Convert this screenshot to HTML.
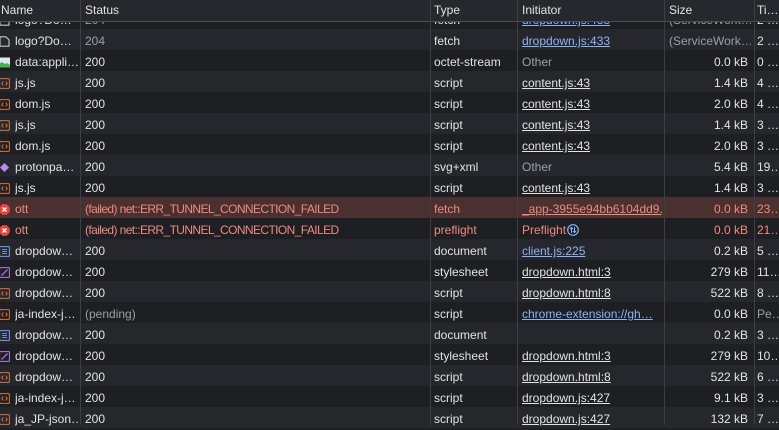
<!DOCTYPE html>
<html><head><meta charset="utf-8"><style>
*{margin:0;padding:0;box-sizing:border-box}
body{width:779px;height:425px;overflow:hidden;background:#1e1f23;font-family:"Liberation Sans",sans-serif;font-size:12px;color:#e3e3e3;position:relative}
.r{position:absolute;left:0;width:779px;height:21px;line-height:21px;white-space:nowrap}
.l{background:#26272c}.d{background:#1e1f23}
.f{background:#4a302f;color:#f08a7e}
.r span{position:absolute;top:2px;overflow:hidden}
.n{left:15px;width:64px}
.s{left:85px;width:340px}
.fl{letter-spacing:-0.6px}
.t{left:434px;width:80px}
.i{left:522px;width:140px}
.z{left:666px;width:82px;text-align:right}
.m{left:757px;width:22px}
.g{color:#9aa0a6}
.u{text-decoration:underline}
.b{color:#8ab4f8}
.ic{position:absolute;left:-1px;top:7px;width:11px;height:11px}
.hdr{position:absolute;left:0;top:0;width:779px;height:22px;background:#26282d;border-bottom:1px solid #4a4d55;line-height:21px;z-index:2}
.hdr span{position:absolute;top:0}
.sep{position:absolute;top:0;height:425px;width:1px;background:#3c3f47;z-index:3}
</style></head><body>
<svg width="0" height="0" style="position:absolute">
<defs>
<symbol id="js" viewBox="0 0 11 11"><rect x="0.5" y="0.5" width="10" height="10" rx="1.5" fill="none" stroke="#c0683a" stroke-width="1.2"/><path d="M4.3 3.5L2.8 5.5 4.3 7.5M6.7 3.5L8.2 5.5 6.7 7.5" fill="none" stroke="#c0683a" stroke-width="1.1"/></symbol>
<symbol id="doc" viewBox="0 0 11 11"><rect x="0.5" y="0.5" width="10" height="10" rx="1" fill="none" stroke="#6a8fd6" stroke-width="1.2"/><path d="M3 3.5h5M3 5.5h5M3 7.5h5" stroke="#6a8fd6" stroke-width="1.1"/></symbol>
<symbol id="css" viewBox="0 0 11 11"><rect x="0.5" y="0.5" width="10" height="10" rx="1" fill="none" stroke="#a070d0" stroke-width="1.2"/><path d="M2.5 8.5L8.5 2.5" stroke="#a070d0" stroke-width="1.4"/></symbol>
<symbol id="err" viewBox="0 0 11 11"><circle cx="5.5" cy="5.5" r="5.5" fill="#e3463d"/><path d="M3.5 3.5l4 4M7.5 3.5l-4 4" stroke="#fff" stroke-width="1.3"/></symbol>
<symbol id="img" viewBox="0 0 11 11"><rect x="0" y="0.5" width="11" height="10" fill="#dfe8f2"/><path d="M0 10.5V7l3-2 3 2 2-1 3 2v2.5z" fill="#4caf50"/></symbol>
<symbol id="fet" viewBox="0 0 11 11"><path d="M1 0.8h6l3 3v6.4H1z" fill="none" stroke="#c8c8c8" stroke-width="1.1"/></symbol>
<symbol id="svg" viewBox="0 0 11 11"><path d="M5.5 1L10 5.5 5.5 10 1 5.5z" fill="#b58cf0"/></symbol>
<symbol id="pf" viewBox="0 0 12 12"><circle cx="6" cy="6" r="5.3" fill="none" stroke="#8ab4f8" stroke-width="1.2"/><path d="M4.5 9V3.5M3 5l1.5-1.5L6 5M7.5 3v5.5M6 7l1.5 1.5L9 7" fill="none" stroke="#8ab4f8" stroke-width="1"/></symbol>
</defs></svg>

<div class="hdr"><span style="left:1px">Name</span><span style="left:85px">Status</span><span style="left:434px">Type</span><span style="left:522px">Initiator</span><span style="left:669px">Size</span><span style="left:757px">Ti…</span></div>
<div class="sep" style="left:80px"></div><div class="sep" style="left:430px"></div><div class="sep" style="left:517px"></div><div class="sep" style="left:664px"></div><div class="sep" style="left:754px"></div>

<div class="r d" style="top:8px"><svg class="ic"><use href="#fet"/></svg><span class="n">logo?Do…</span><span class="s g">204</span><span class="t">fetch</span><span class="i u b">dropdown.js:433</span><span class="z g" style="text-align:left;left:669px">(ServiceWork…</span><span class="m">2 …</span></div>
<div class="r l" style="top:29px"><svg class="ic"><use href="#fet"/></svg><span class="n">logo?Do…</span><span class="s g">204</span><span class="t">fetch</span><span class="i u b">dropdown.js:433</span><span class="z g" style="text-align:left;left:669px">(ServiceWork…</span><span class="m">2 …</span></div>
<div class="r d" style="top:50px"><svg class="ic"><use href="#img"/></svg><span class="n">data:appli…</span><span class="s">200</span><span class="t">octet-stream</span><span class="i g">Other</span><span class="z">0.0 kB</span><span class="m">0 …</span></div>
<div class="r l" style="top:71px"><svg class="ic"><use href="#js"/></svg><span class="n">js.js</span><span class="s">200</span><span class="t">script</span><span class="i u">content.js:43</span><span class="z">1.4 kB</span><span class="m">4 …</span></div>
<div class="r d" style="top:92px"><svg class="ic"><use href="#js"/></svg><span class="n">dom.js</span><span class="s">200</span><span class="t">script</span><span class="i u">content.js:43</span><span class="z">2.0 kB</span><span class="m">4 …</span></div>
<div class="r l" style="top:113px"><svg class="ic"><use href="#js"/></svg><span class="n">js.js</span><span class="s">200</span><span class="t">script</span><span class="i u">content.js:43</span><span class="z">1.4 kB</span><span class="m">3 …</span></div>
<div class="r d" style="top:134px"><svg class="ic"><use href="#js"/></svg><span class="n">dom.js</span><span class="s">200</span><span class="t">script</span><span class="i u">content.js:43</span><span class="z">2.0 kB</span><span class="m">3 …</span></div>
<div class="r l" style="top:155px"><svg class="ic"><use href="#svg"/></svg><span class="n">protonpa…</span><span class="s">200</span><span class="t">svg+xml</span><span class="i g">Other</span><span class="z">5.4 kB</span><span class="m">19…</span></div>
<div class="r d" style="top:176px"><svg class="ic"><use href="#js"/></svg><span class="n">js.js</span><span class="s">200</span><span class="t">script</span><span class="i u">content.js:43</span><span class="z">1.4 kB</span><span class="m">3 …</span></div>
<div class="r f" style="top:197px"><svg class="ic"><use href="#err"/></svg><span class="n">ott</span><span class="s fl">(failed) net::ERR_TUNNEL_CONNECTION_FAILED</span><span class="t">fetch</span><span class="i u">_app-3955e94bb6104dd9.js</span><span class="z">0.0 kB</span><span class="m">23…</span></div>
<div class="r d" style="top:218px;color:#f08a7e"><svg class="ic"><use href="#err"/></svg><span class="n">ott</span><span class="s fl">(failed) net::ERR_TUNNEL_CONNECTION_FAILED</span><span class="t">preflight</span><span class="i">Preflight<svg width="12" height="12" style="vertical-align:-2px;margin-left:1px"><use href="#pf"/></svg></span><span class="z">0.0 kB</span><span class="m">21…</span></div>
<div class="r l" style="top:239px"><svg class="ic"><use href="#doc"/></svg><span class="n">dropdow…</span><span class="s">200</span><span class="t">document</span><span class="i u b">client.js:225</span><span class="z">0.2 kB</span><span class="m">5 …</span></div>
<div class="r d" style="top:260px"><svg class="ic"><use href="#css"/></svg><span class="n">dropdow…</span><span class="s">200</span><span class="t">stylesheet</span><span class="i u">dropdown.html:3</span><span class="z">279 kB</span><span class="m">11…</span></div>
<div class="r l" style="top:281px"><svg class="ic"><use href="#js"/></svg><span class="n">dropdow…</span><span class="s">200</span><span class="t">script</span><span class="i u">dropdown.html:8</span><span class="z">522 kB</span><span class="m">8 …</span></div>
<div class="r d" style="top:302px"><svg class="ic"><use href="#js"/></svg><span class="n">ja-index-j…</span><span class="s g">(pending)</span><span class="t">script</span><span class="i u b">chrome-extension://gh…</span><span class="z">0.0 kB</span><span class="m g">Pe…</span></div>
<div class="r l" style="top:323px"><svg class="ic"><use href="#doc"/></svg><span class="n">dropdow…</span><span class="s">200</span><span class="t">document</span><span class="i"></span><span class="z">0.2 kB</span><span class="m">3 …</span></div>
<div class="r d" style="top:344px"><svg class="ic"><use href="#css"/></svg><span class="n">dropdow…</span><span class="s">200</span><span class="t">stylesheet</span><span class="i u">dropdown.html:3</span><span class="z">279 kB</span><span class="m">10…</span></div>
<div class="r l" style="top:365px"><svg class="ic"><use href="#js"/></svg><span class="n">dropdow…</span><span class="s">200</span><span class="t">script</span><span class="i u">dropdown.html:8</span><span class="z">522 kB</span><span class="m">6 …</span></div>
<div class="r d" style="top:386px"><svg class="ic"><use href="#js"/></svg><span class="n">ja-index-j…</span><span class="s">200</span><span class="t">script</span><span class="i u">dropdown.js:427</span><span class="z">9.1 kB</span><span class="m">3 …</span></div>
<div class="r l" style="top:407px"><svg class="ic"><use href="#js"/></svg><span class="n">ja_JP-json…</span><span class="s">200</span><span class="t">script</span><span class="i u">dropdown.js:427</span><span class="z">132 kB</span><span class="m">7 …</span></div>
</body></html>
